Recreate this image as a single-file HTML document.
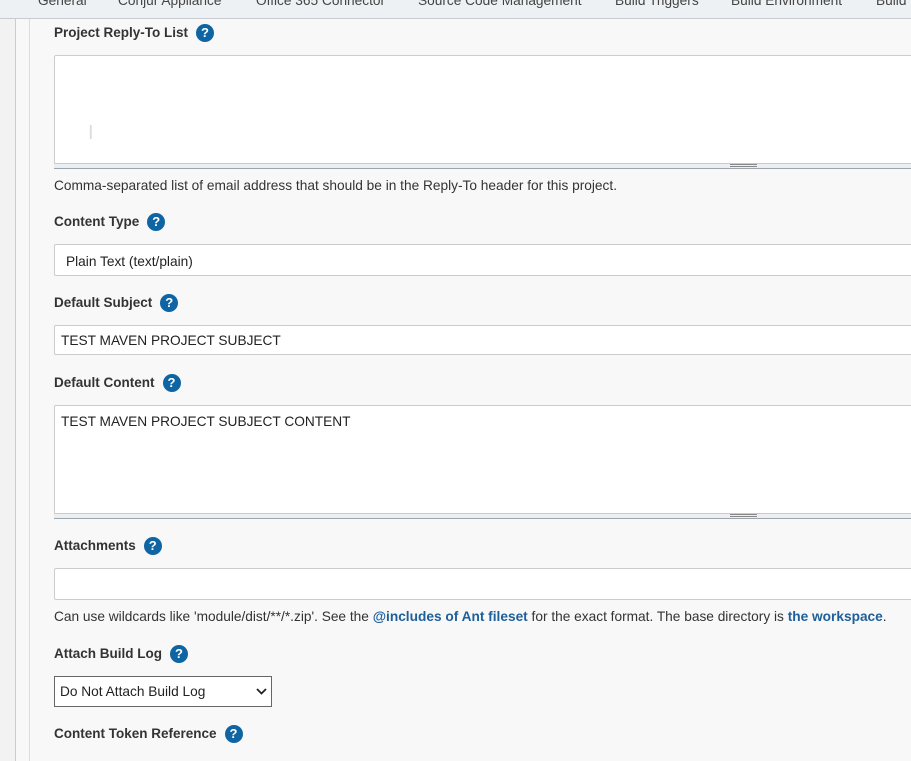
<!DOCTYPE html>
<html><head><meta charset="utf-8"><style>
*{box-sizing:border-box;margin:0;padding:0}
body{width:911px;height:761px;overflow:hidden;background:#f8f8f8;font-family:"Liberation Sans",sans-serif;font-size:13.7px;color:#333;position:relative}
.tabs{position:absolute;left:0;top:0;width:911px;height:19px;background:#eef1f3;border-bottom:1px solid #c8ccd0;overflow:hidden;white-space:nowrap}
.tabs span{position:absolute;top:-7px;font-size:13.7px;color:#444}
.lstrip{position:absolute;left:0;top:19px;width:16px;height:742px;background:#f2f2f2;border-right:1px solid #ccc}
.l2{position:absolute;left:29px;top:19px;width:1px;height:742px;background:#ddd}
.lbl{position:absolute;left:54px;font-weight:bold;font-size:13.5px;color:#333}
.q{display:inline-block;width:18px;height:18px;border-radius:50%;background:#0f65a3;color:#fff;font-size:13px;text-align:center;line-height:18px;font-weight:bold;margin-left:8px;vertical-align:0px}
.box{position:absolute;left:54px;width:870px;background:#fff;border:1px solid #ccc;border-radius:2px}
.grip{position:absolute;left:54px;width:870px;height:6px;background:#eceef0;border-top:1px solid #ccc;border-bottom:1px solid #9aa5b0}
.grip i{position:absolute;left:676px;top:0px;width:27px;height:3px;border-top:1px solid #888;border-bottom:1px solid #888}
.txt{position:absolute;left:54px;font-size:13.7px;color:#333}
.in{position:absolute;left:62px;font-size:13.7px;color:#222}
a{color:#1d5f9b;font-weight:bold;text-decoration:none}
</style></head><body>
<div class="tabs">
<span style="left:38px">General</span><span style="left:118px">Conjur Appliance</span><span style="left:256px">Office 365 Connector</span><span style="left:418px">Source Code Management</span><span style="left:615px">Build Triggers</span><span style="left:731px">Build Environment</span><span style="left:876px">Build</span>
</div>
<div class="lstrip"></div><div class="l2"></div>

<div class="lbl" style="top:24px">Project Reply-To List<span class="q">?</span></div>
<div class="box" style="top:55px;height:109px;border-bottom:none"></div>
<div style="position:absolute;left:88px;top:122px;color:#ddd;font-size:20px">I</div>
<div class="grip" style="top:163px"><i></i></div>
<div class="txt" style="top:178px">Comma-separated list of email address that should be in the Reply-To header for this project.</div>

<div class="lbl" style="top:213px">Content Type<span class="q">?</span></div>
<div class="box" style="top:244px;height:32px"></div>
<div class="in" style="top:254px;left:66px">Plain Text (text/plain)</div>

<div class="lbl" style="top:294px">Default Subject<span class="q">?</span></div>
<div class="box" style="top:325px;height:30px"></div>
<div class="in" style="top:333px;left:61px">TEST MAVEN PROJECT SUBJECT</div>

<div class="lbl" style="top:374px">Default Content<span class="q">?</span></div>
<div class="box" style="top:405px;height:109px;border-bottom:none"></div>
<div class="in" style="top:414px;left:61px">TEST MAVEN PROJECT SUBJECT CONTENT</div>
<div class="grip" style="top:513px"><i></i></div>

<div class="lbl" style="top:537px">Attachments<span class="q">?</span></div>
<div class="box" style="top:568px;height:32px"></div>
<div class="txt" style="top:609px">Can use wildcards like 'module/dist/**/*.zip'. See the <a>@includes of Ant fileset</a> for the exact format. The base directory is <a>the workspace</a>.</div>

<div class="lbl" style="top:645px">Attach Build Log<span class="q">?</span></div>
<div style="position:absolute;left:54px;top:676px;width:218px;height:31px;background:#fff;border:1px solid #666"></div>
<div class="in" style="top:684px;left:60px">Do Not Attach Build Log</div>
<svg style="position:absolute;left:256px;top:688px" width="11" height="7" viewBox="0 0 11 7"><path d="M1 1L5.5 5.5L10 1" fill="none" stroke="#222" stroke-width="1.8"/></svg>

<div class="lbl" style="top:725px">Content Token Reference<span class="q">?</span></div>
</body></html>
